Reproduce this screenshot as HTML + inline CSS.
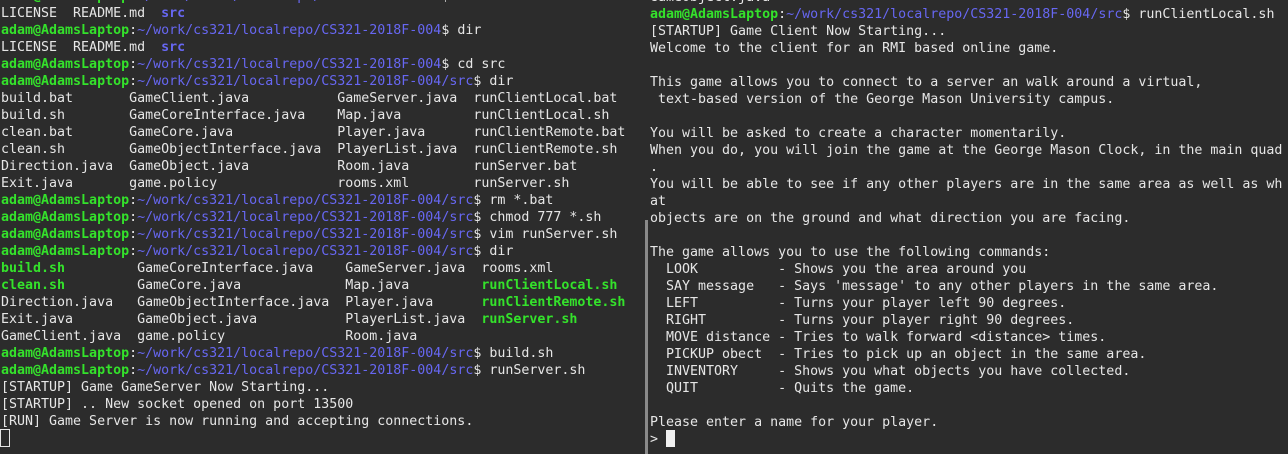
<!DOCTYPE html>
<html><head><meta charset="utf-8"><style>
html,body{margin:0;padding:0;background:#2c2c2c;width:1288px;height:454px;overflow:hidden}
pre{margin:0;position:absolute;font-family:"DejaVu Sans Mono","Liberation Mono",monospace;font-size:13.3px;line-height:17px;color:#e6e6e6;white-space:pre}
.g{color:#34e22b;font-weight:bold}
.b{color:#6767f2;font-weight:bold}
.p{color:#6767f2}
#l{left:1px;top:-12px;width:640px;overflow:hidden}
#r{left:650px;top:-11px;width:638px;overflow:hidden}
.div{position:absolute;left:645px;top:220px;width:3px;height:234px;background:#8a8a8a}
.c1{position:absolute;left:0;top:429px;width:8px;height:16px;border:1px solid #e6e6e6}
.c2{position:absolute;left:666px;top:430px;width:9px;height:17px;background:#f0f0f0}
</style></head><body>
<pre id="l"><span class="g">adam@AdamsLaptop</span>:<span class="p">~/work/cs321/localrepo/CS321-2018F-004</span>$ cd
LICENSE  README.md  <span class="b">src</span>
<span class="g">adam@AdamsLaptop</span>:<span class="p">~/work/cs321/localrepo/CS321-2018F-004</span>$ dir
LICENSE  README.md  <span class="b">src</span>
<span class="g">adam@AdamsLaptop</span>:<span class="p">~/work/cs321/localrepo/CS321-2018F-004</span>$ cd src
<span class="g">adam@AdamsLaptop</span>:<span class="p">~/work/cs321/localrepo/CS321-2018F-004/src</span>$ dir
build.bat       GameClient.java           GameServer.java  runClientLocal.bat
build.sh        GameCoreInterface.java    Map.java         runClientLocal.sh
clean.bat       GameCore.java             Player.java      runClientRemote.bat
clean.sh        GameObjectInterface.java  PlayerList.java  runClientRemote.sh
Direction.java  GameObject.java           Room.java        runServer.bat
Exit.java       game.policy               rooms.xml        runServer.sh
<span class="g">adam@AdamsLaptop</span>:<span class="p">~/work/cs321/localrepo/CS321-2018F-004/src</span>$ rm *.bat
<span class="g">adam@AdamsLaptop</span>:<span class="p">~/work/cs321/localrepo/CS321-2018F-004/src</span>$ chmod 777 *.sh
<span class="g">adam@AdamsLaptop</span>:<span class="p">~/work/cs321/localrepo/CS321-2018F-004/src</span>$ vim runServer.sh
<span class="g">adam@AdamsLaptop</span>:<span class="p">~/work/cs321/localrepo/CS321-2018F-004/src</span>$ dir
<span class="g">build.sh</span>         GameCoreInterface.java    GameServer.java  rooms.xml
<span class="g">clean.sh</span>         GameCore.java             Map.java         <span class="g">runClientLocal.sh</span>
Direction.java   GameObjectInterface.java  Player.java      <span class="g">runClientRemote.sh</span>
Exit.java        GameObject.java           PlayerList.java  <span class="g">runServer.sh</span>
GameClient.java  game.policy               Room.java
<span class="g">adam@AdamsLaptop</span>:<span class="p">~/work/cs321/localrepo/CS321-2018F-004/src</span>$ build.sh
<span class="g">adam@AdamsLaptop</span>:<span class="p">~/work/cs321/localrepo/CS321-2018F-004/src</span>$ runServer.sh
[STARTUP] Game GameServer Now Starting...
[STARTUP] .. New socket opened on port 13500
[RUN] Game Server is now running and accepting connections.
</pre>
<div class="c1"></div>
<div class="div"></div>
<pre id="r">GameObject.java
<span class="g">adam@AdamsLaptop</span>:<span class="p">~/work/cs321/localrepo/CS321-2018F-004/src</span>$ runClientLocal.sh
[STARTUP] Game Client Now Starting...
Welcome to the client for an RMI based online game.

This game allows you to connect to a server an walk around a virtual,
 text-based version of the George Mason University campus.

You will be asked to create a character momentarily.
When you do, you will join the game at the George Mason Clock, in the main quad
.
You will be able to see if any other players are in the same area as well as wh
at
objects are on the ground and what direction you are facing.

The game allows you to use the following commands:
  LOOK          - Shows you the area around you
  SAY message   - Says 'message' to any other players in the same area.
  LEFT          - Turns your player left 90 degrees.
  RIGHT         - Turns your player right 90 degrees.
  MOVE distance - Tries to walk forward &lt;distance&gt; times.
  PICKUP obect  - Tries to pick up an object in the same area.
  INVENTORY     - Shows you what objects you have collected.
  QUIT          - Quits the game.

Please enter a name for your player.
&gt; 
</pre>
<div class="c2"></div>
</body></html>
